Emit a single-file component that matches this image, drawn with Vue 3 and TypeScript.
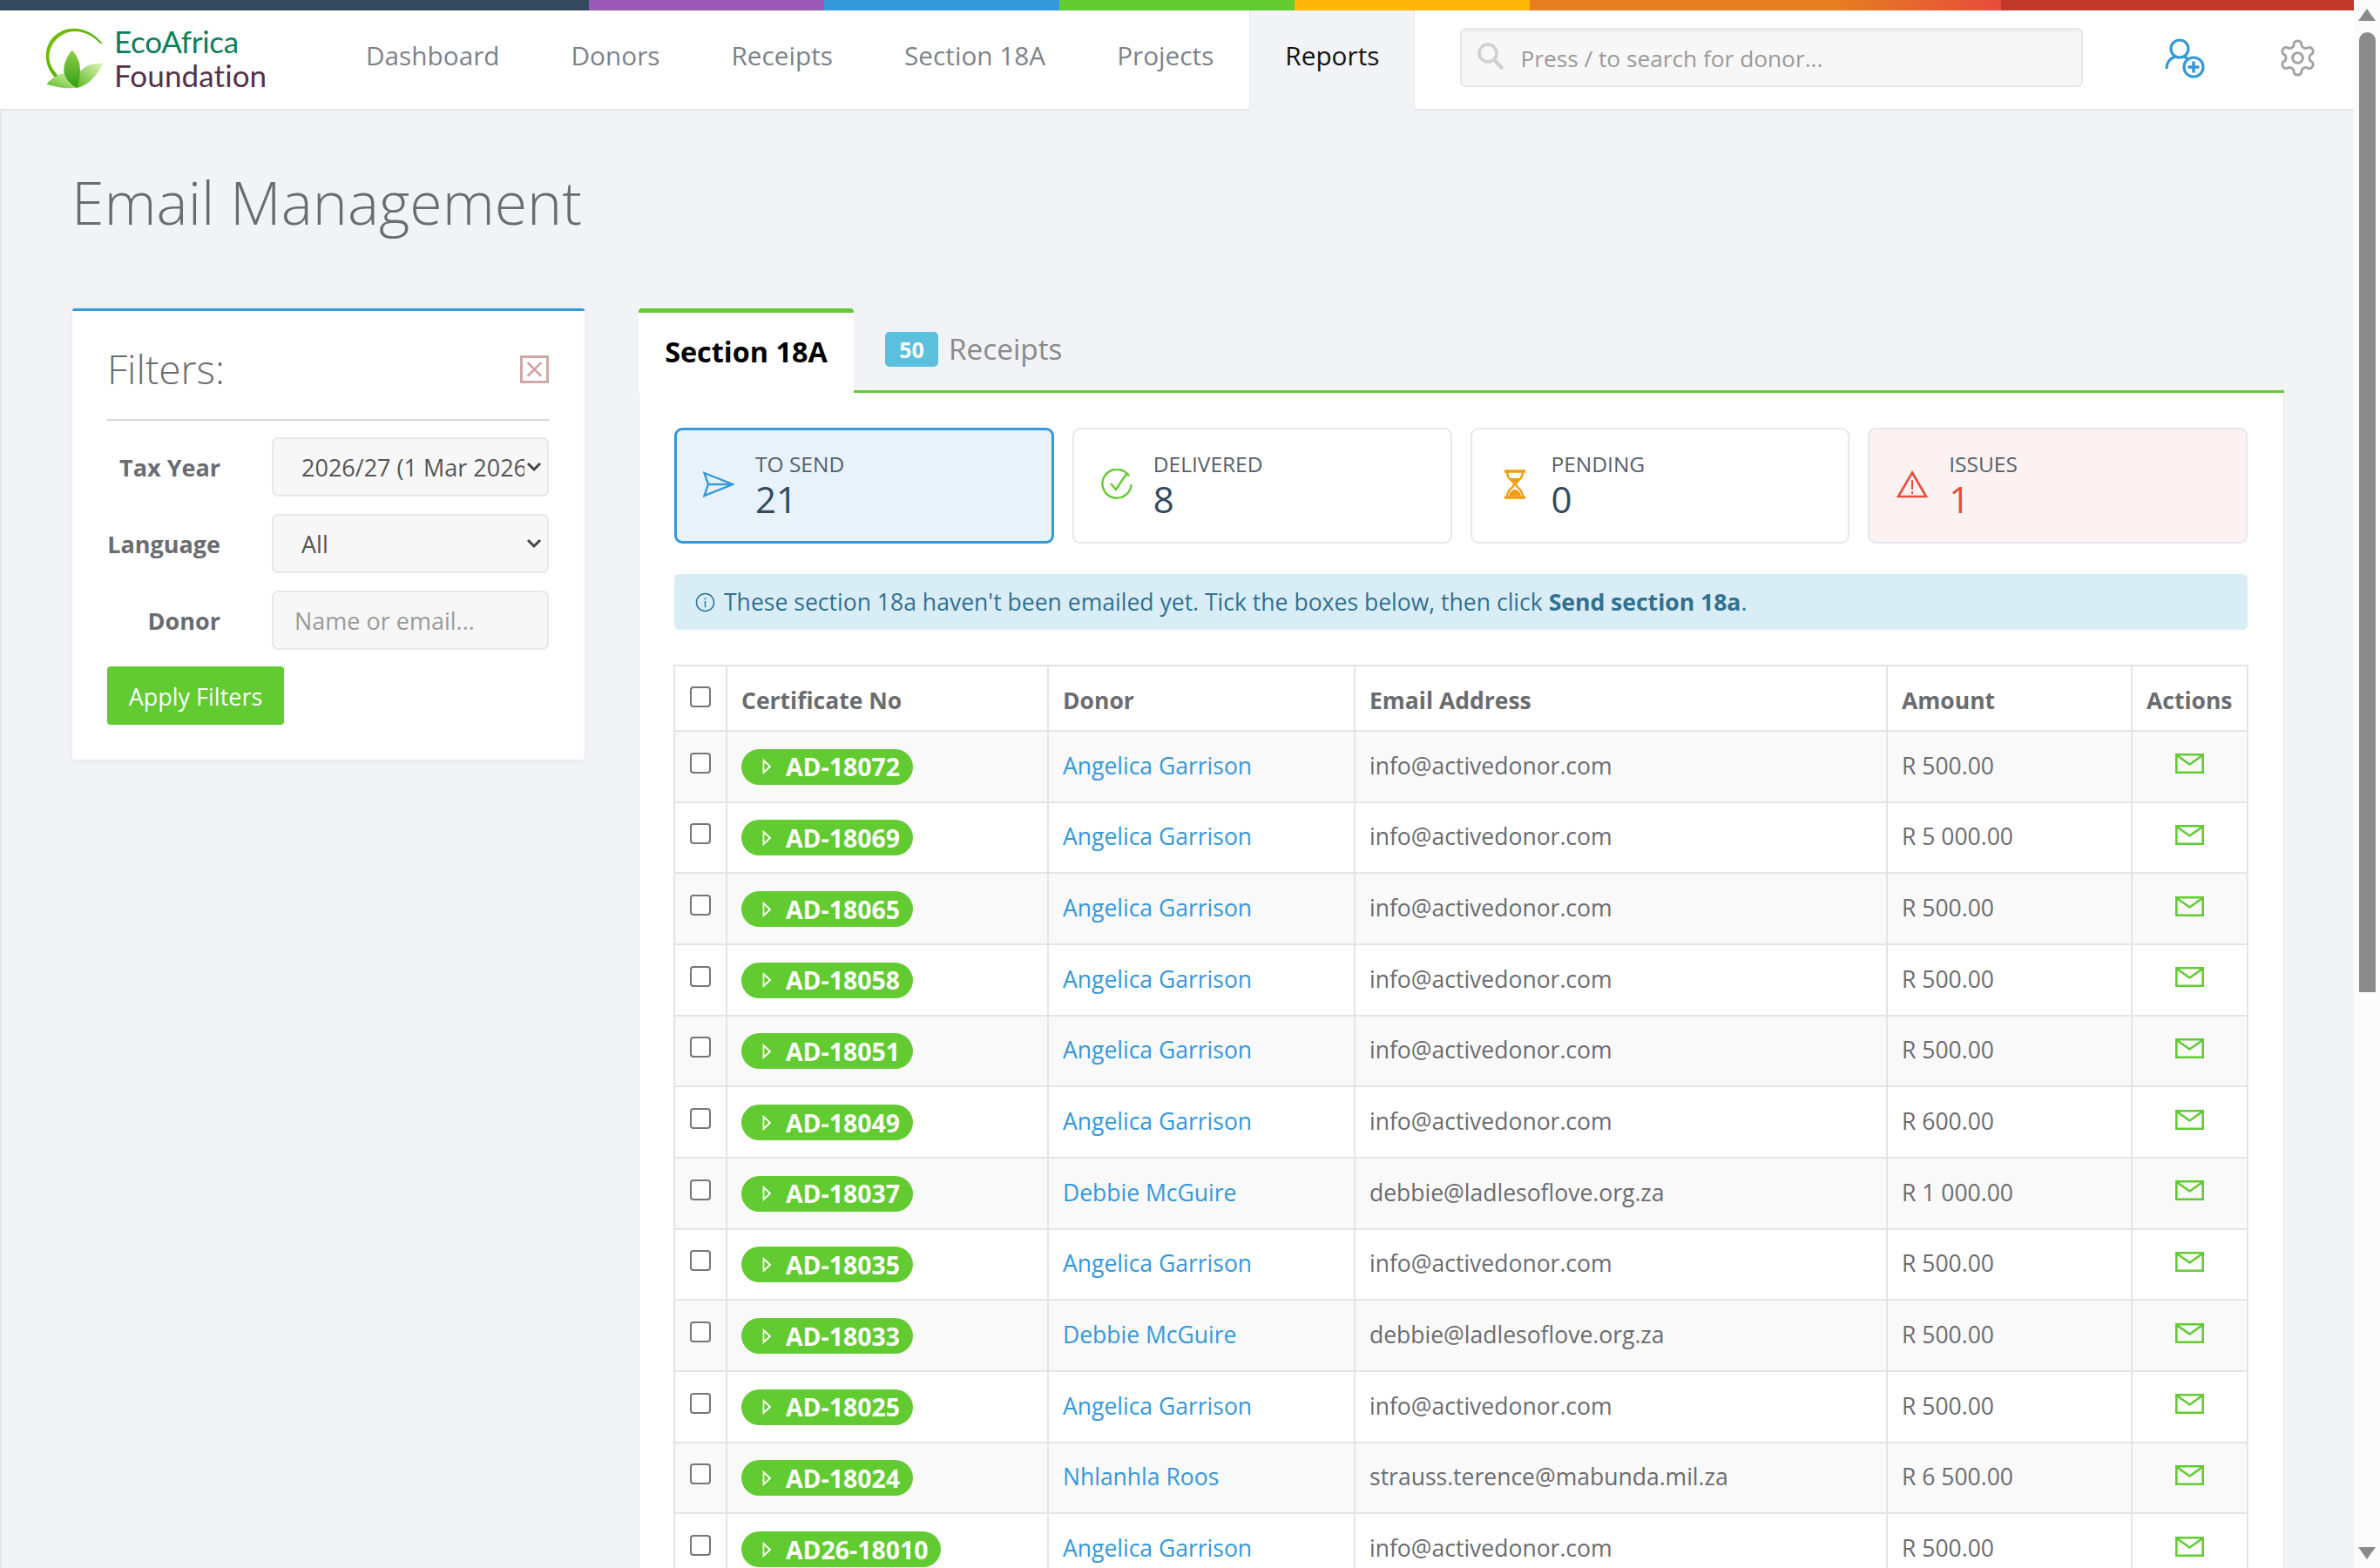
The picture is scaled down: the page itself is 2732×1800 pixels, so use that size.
<template>
  <div class="shell">
    <div class="page">
      <div class="rainbow"></div>
      <header class="topbar">
        <a class="brand">
          <svg class="brand-mark" viewBox="60 60 210 220">
            <defs>
              <linearGradient id="arcGrad" x1="0" y1="0" x2="1" y2="1">
                <stop offset="0" stop-color="#7cc400" />
                <stop offset="0.6" stop-color="#52ad0a" />
                <stop offset="1" stop-color="#a8d86a" />
              </linearGradient>
              <linearGradient id="leafMid" x1="0" y1="0" x2="0" y2="1">
                <stop offset="0" stop-color="#8fd04a" />
                <stop offset="1" stop-color="#2f9e12" />
              </linearGradient>
              <linearGradient id="leafSide" x1="1" y1="0" x2="0" y2="1">
                <stop offset="0" stop-color="#e4f5bd" />
                <stop offset="1" stop-color="#58b81e" />
              </linearGradient>
            </defs>
            <path d="M265 118C235 82 200 65 165 65 110 65 68 105 68 160c0 38 20 72 62 102l45 10c-54-24-96-66-96-108 0-50 42-89 90-89 33 0 62 17 86 41z" fill="url(#arcGrad)" />
            <path d="M70 258c25-30 60-42 80-40 14 12 22 34 24 52-40 6-75-4-104-12z" fill="url(#leafSide)" />
            <path d="M265 185c-40-2-72 14-88 40-4 14-4 30-2 46 40-8 72-45 90-86z" fill="url(#leafSide)" />
            <path d="M158 140c-20 25-30 50-28 75 4 25 24 45 45 56 10-30 14-60 8-88-6-18-14-32-25-43z" fill="url(#leafMid)" />
          </svg>
          <span class="brand-text">
            <span class="brand-eco">EcoAfrica</span>
            <span class="brand-found">Foundation</span>
          </span>
        </a>
        <nav class="nav">
          <a v-for="item in navItems" :key="item" class="nav-item" :class="{ active: item === 'Reports' }">{{ item }}</a>
        </nav>
        <label class="search">
          <svg class="search-icon" viewBox="0 0 31 31" fill="none" stroke="#d0d0d0" stroke-width="3.5">
            <circle cx="12" cy="12" r="10" />
            <path d="M19 19.500 29 30" stroke-width="4.500" />
          </svg>
          <input type="text" placeholder="Press / to search for donor..." />
        </label>
        <svg class="user-add" viewBox="0 0 48 48" fill="none" stroke="#3498db" stroke-width="3.2">
          <circle cx="17" cy="13" r="10" />
          <path d="M2 36c0-7 4-12 10-14" />
          <path d="M22 22.500c1.500.3 3 .8 4 1.500" />
          <circle cx="33" cy="34" r="11" />
          <path d="M33 27.500v13M26.500 34h13" stroke-width="3.600" />
        </svg>
        <svg class="gear" viewBox="0 0 24 24" fill="none" stroke="#a3a3a3" stroke-width="1.500">
          <path d="M12.220 2h-.44a2 2 0 0 0-2 2v.18a2 2 0 0 1-1 1.730l-.43.25a2 2 0 0 1-2 0l-.15-.08a2 2 0 0 0-2.730.73l-.22.38a2 2 0 0 0 .73 2.730l.15.1a2 2 0 0 1 1 1.720v.51a2 2 0 0 1-1 1.740l-.15.09a2 2 0 0 0-.73 2.730l.22.38a2 2 0 0 0 2.730.73l.15-.08a2 2 0 0 1 2 0l.43.25a2 2 0 0 1 1 1.730V20a2 2 0 0 0 2 2h.44a2 2 0 0 0 2-2v-.18a2 2 0 0 1 1-1.730l.43-.25a2 2 0 0 1 2 0l.15.08a2 2 0 0 0 2.730-.73l.22-.39a2 2 0 0 0-.73-2.730l-.15-.08a2 2 0 0 1-1-1.740v-.5a2 2 0 0 1 1-1.740l.15-.09a2 2 0 0 0 .73-2.730l-.22-.38a2 2 0 0 0-2.730-.73l-.15.08a2 2 0 0 1-2 0l-.43-.25a2 2 0 0 1-1-1.730V4a2 2 0 0 0-2-2z" />
          <circle cx="12" cy="12" r="3" />
        </svg>
      </header>

      <main class="content">
        <h1 class="title">Email Management</h1>
        <div class="columns">
          <aside class="filters">
            <div class="filters-head">
              <h2>Filters:</h2>
              <span class="filters-close">
                <svg viewBox="0 0 20 20" stroke="#cf9fa0" stroke-width="2" fill="none"><path d="M4 4l12 12M16 4 4 16" /></svg>
              </span>
            </div>
            <div class="filters-form">
              <label>Tax Year</label>
              <select class="control">
                <option>2026/27 (1 Mar 2026 – 28 Feb 2027)</option>
              </select>
              <label>Language</label>
              <select class="control">
                <option>All</option>
              </select>
              <label>Donor</label>
              <input class="control input" type="text" placeholder="Name or email..." />
            </div>
            <button class="apply">Apply Filters</button>
          </aside>

          <section class="panel">
            <div class="tabs">
              <a class="tab active">Section 18A</a>
              <a class="tab-rest">
                <span class="tab-badge">50</span>
                <span class="tab-label">Receipts</span>
              </a>
            </div>
            <div class="panel-body">
              <div class="stats">
                <div class="stat selected">
                  <svg class="stat-icon" viewBox="0 0 36 30" fill="none" stroke="#3498db" stroke-width="2.400">
                    <path d="M1.500 2 34 15 1.500 28 6 15z" />
                    <path d="M6 15h28" />
                  </svg>
                  <div>
                    <div class="stat-label">TO SEND</div>
                    <div class="stat-value">21</div>
                  </div>
                </div>
                <div class="stat">
                  <svg class="stat-icon" viewBox="0 0 36 36" fill="none" stroke="#62cb31" stroke-width="2.400">
                    <path d="M32 8.500A16.500 16.500 0 1 0 34.500 18" />
                    <path d="M11 17l6 7L29 6" />
                  </svg>
                  <div>
                    <div class="stat-label">DELIVERED</div>
                    <div class="stat-value">8</div>
                  </div>
                </div>
                <div class="stat">
                  <svg class="stat-icon" viewBox="0 0 36 34" fill="none" stroke="#f39c12" stroke-width="2.400">
                    <path d="M6 2h24M6 32h24" stroke-width="3.400" />
                    <path d="M9 3c0 9 8 10 8 14s-8 5-8 14M27 3c0 9-8 10-8 14s8 5 8 14" />
                    <path d="M11 10h14l-7 6zM11 30c1-4 4-7 7-7s6 3 7 7z" fill="#f39c12" stroke="none" />
                  </svg>
                  <div>
                    <div class="stat-label">PENDING</div>
                    <div class="stat-value">0</div>
                  </div>
                </div>
                <div class="stat issue">
                  <svg class="stat-icon" viewBox="0 0 36 32" fill="none" stroke="#e74c3c" stroke-width="2.600">
                    <path d="M18 2.500 34 30H2z" stroke-linejoin="miter" />
                    <path d="M18 11v11M18 24v3" stroke-width="2" />
                  </svg>
                  <div>
                    <div class="stat-label">ISSUES</div>
                    <div class="stat-value">1</div>
                  </div>
                </div>
              </div>

              <div class="notice">
                <svg class="notice-icon" viewBox="0 0 24 24" fill="none" stroke="#31708f" stroke-width="1.500">
                  <circle cx="12" cy="12" r="10.500" />
                  <path d="M12 10.500v7.500M12 6.500v2" />
                </svg>
                <span>These section 18a haven't been emailed yet. Tick the boxes below, then click <b>Send section 18a</b>.</span>
              </div>

              <table class="grid">
                <colgroup>
                  <col v-for="w in colWidths" :key="w" :style="{ width: w + 'px' }" />
                </colgroup>
                <thead>
                  <tr>
                    <th class="check"><input type="checkbox" /></th>
                    <th>Certificate No</th>
                    <th>Donor</th>
                    <th>Email Address</th>
                    <th>Amount</th>
                    <th>Actions</th>
                  </tr>
                </thead>
                <tbody>
                  <tr v-for="row in rows" :key="row.cert">
                    <td class="check"><input type="checkbox" /></td>
                    <td>
                      <span class="cert">
                        <svg viewBox="0 0 11 18" fill="none" stroke="#fff" stroke-width="1.800"><path d="M1.500 2 9 9 1.500 16z" /></svg>
                        {{ row.cert }}
                      </span>
                    </td>
                    <td><a class="donor">{{ row.donor }}</a></td>
                    <td>{{ row.email }}</td>
                    <td>{{ row.amount }}</td>
                    <td class="action">
                      <svg viewBox="0 0 33 23" fill="none" stroke="#62cb31" stroke-width="2.600"><path d="M1.300 1.300h30.400v20.400H1.300zM1.300 1.800 16.500 12.500 31.700 1.800" /></svg>
                    </td>
                  </tr>
                </tbody>
              </table>
            </div>
          </section>
        </div>
      </main>
    </div>

    <div class="scrollbar">
      <span class="arrow up"></span>
      <span class="thumb"></span>
      <span class="arrow down"></span>
    </div>
  </div>
</template>

<script setup lang="ts">
interface Row {
  cert: string
  donor: string
  email: string
  amount: string
}

const navItems = ['Dashboard', 'Donors', 'Receipts', 'Section 18A', 'Projects', 'Reports']
const colWidths = [60, 369, 352, 611, 281, 133]

const angelica = { donor: 'Angelica Garrison', email: 'info@activedonor.com' }
const debbie = { donor: 'Debbie McGuire', email: 'debbie@ladlesoflove.org.za' }

const rows: Row[] = [
  { cert: 'AD-18072', ...angelica, amount: 'R 500.00' },
  { cert: 'AD-18069', ...angelica, amount: 'R 5 000.00' },
  { cert: 'AD-18065', ...angelica, amount: 'R 500.00' },
  { cert: 'AD-18058', ...angelica, amount: 'R 500.00' },
  { cert: 'AD-18051', ...angelica, amount: 'R 500.00' },
  { cert: 'AD-18049', ...angelica, amount: 'R 600.00' },
  { cert: 'AD-18037', ...debbie, amount: 'R 1 000.00' },
  { cert: 'AD-18035', ...angelica, amount: 'R 500.00' },
  { cert: 'AD-18033', ...debbie, amount: 'R 500.00' },
  { cert: 'AD-18025', ...angelica, amount: 'R 500.00' },
  { cert: 'AD-18024', donor: 'Nhlanhla Roos', email: 'strauss.terence@mabunda.mil.za', amount: 'R 6 500.00' },
  { cert: 'AD26-18010', ...angelica, amount: 'R 500.00' },
]
</script>

<style>
html,
body {
  margin: 0;
  overflow: hidden;
}
</style>

<style scoped>
.shell {
  display: flex;
  height: 1800px;
  overflow: hidden;
  font-family: "Open Sans", "Liberation Sans", sans-serif;
  font-size: 26.5px;
  color: #6a6c6f;
}

.page {
  flex: 1;
  min-width: 0;
  display: flex;
  flex-direction: column;
  background: #f1f3f7;
}

.rainbow {
  height: 12px;
  background: linear-gradient(to right,
    #34495e 25%, #9b59b6 25%, #9b59b6 35%, #3498db 35%, #3498db 45%,
    #62cb31 45%, #62cb31 55%, #ffb606 55%, #ffb606 65%, #e67e22 65%,
    #e67e22 78%, #e74c3c 85%, #c0392b 85%);
}

.topbar {
  display: flex;
  align-items: center;
  height: 115px;
  box-sizing: border-box;
  background: #fff;
  border-bottom: 2px solid #e6e6e6;
}

.brand {
  width: 379px;
  height: 100%;
  box-sizing: border-box;
  padding: 0 0 3px 50px;
  display: flex;
  align-items: center;
  gap: 11px;
}

.brand-mark {
  width: 70px;
  height: 73px;
  flex: none;
}

.brand-text {
  display: flex;
  flex-direction: column;
  font-family: Lato, "Open Sans", sans-serif;
  font-size: 35px;
  line-height: 39px;
}

.brand-eco {
  color: #0b7f5c;
  letter-spacing: -0.3px;
}

.brand-found {
  color: #54304a;
  letter-spacing: 0.1px;
}

.nav {
  display: flex;
  align-self: stretch;
  margin-bottom: -2px;
}

.nav-item {
  display: flex;
  align-items: center;
  padding: 0 41px 12px;
  font-size: 29.750px;
  color: #7c8289;
}

.nav-item.active {
  padding: 0 40px 12px;
  color: #111;
  background: #f1f3f7;
  border-left: 1px solid #e6e6e6;
  border-right: 1px solid #e6e6e6;
}

.search {
  width: 715px;
  height: 68px;
  box-sizing: border-box;
  margin: 0 0 5px 52px;
  padding-left: 18px;
  display: flex;
  align-items: center;
  gap: 18px;
  background: #f7f7f7;
  border: 2px solid #e8e8e8;
  border-radius: 6px;
  box-shadow: inset 0 2px 2px rgba(0, 0, 0, 0.05);
}

.search-icon {
  width: 31px;
  height: 31px;
  flex: none;
  margin-bottom: 4px;
}

.search input {
  flex: 1;
  min-width: 0;
  border: 0;
  outline: 0;
  background: transparent;
  font: inherit;
  font-size: 26.250px;
  padding: 2px 0 0;
}

input::placeholder {
  color: #9a9a9a;
  opacity: 1;
}

.user-add {
  width: 48px;
  height: 48px;
  flex: none;
  margin: 0 0 4px 94px;
}

.gear {
  width: 47px;
  height: 47px;
  flex: none;
  margin: 0 0 5px 81px;
}

.content {
  flex: 1;
  min-height: 0;
  padding: 63px 80px 0 81px;
  border-left: 2px solid #e6e6e6;
  box-sizing: border-box;
}

.title {
  margin: 0 0 80px -1px;
  font-size: 68px;
  line-height: 84px;
  font-weight: 300;
  color: #6a6c6f;
}

.columns {
  display: flex;
  align-items: flex-start;
  gap: 62px;
}

.filters {
  width: 588px;
  flex: none;
  box-sizing: border-box;
  padding: 0 41px 40px 40px;
  background: #fff;
  border-top: 3px solid #3498db;
  border-radius: 3px;
  box-shadow: 0 1px 6px rgba(0, 0, 0, 0.06);
}

.filters-head {
  display: flex;
  align-items: center;
  justify-content: space-between;
  padding: 36px 0 28px;
  border-bottom: 2px solid #d8d8d8;
}

.filters-head h2 {
  margin: 0;
  font-size: 46px;
  line-height: 60px;
  font-weight: 300;
}

.filters-close {
  width: 33px;
  height: 32px;
  box-sizing: border-box;
  border: 3px solid #cfa8a8;
  margin-top: 2px;
}

.filters-close svg {
  display: block;
  width: 100%;
  height: 100%;
}

.filters-form {
  display: grid;
  grid-template-columns: 130px 1fr;
  column-gap: 59px;
  row-gap: 20px;
  align-items: center;
  margin-top: 19px;
}

.filters-form label {
  text-align: right;
  font-weight: 700;
  font-size: 27px;
}

.control {
  width: 100%;
  height: 68px;
  box-sizing: border-box;
  padding: 0 24px 0 32px;
  font: inherit;
  font-size: 27px;
  color: #555;
  background-color: #f7f7f7;
  border: 2px solid #e8e8e8;
  border-radius: 7px;
  outline: 0;
}

select.control {
  appearance: none;
  padding-right: 26px;
  background-image: url("data:image/svg+xml,%3Csvg xmlns='http://www.w3.org/2000/svg' width='18' height='12' fill='none' stroke='%23444' stroke-width='3'%3E%3Cpath d='M2 2l7 7 7-7'/%3E%3C/svg%3E");
  background-repeat: no-repeat;
  background-position: right 6px center;
}

.input {
  padding-left: 24px;
}

.apply {
  display: block;
  margin-top: 19px;
  width: 203px;
  height: 67px;
  padding-top: 2px;
  border: 0;
  border-radius: 4px;
  background: #62cb31;
  color: #fff;
  font: inherit;
  font-size: 27px;
}

.panel {
  flex: 1;
  min-width: 0;
}

.tabs {
  display: flex;
  height: 97px;
}

.tab {
  width: 247px;
  box-sizing: border-box;
  display: flex;
  align-items: center;
  justify-content: center;
  padding-bottom: 4px;
  background: #fff;
  border-top: 5px solid #62cb31;
  border-radius: 4px 4px 0 0;
  font-size: 32.400px;
  font-weight: 700;
  color: #000;
}

.tab-rest {
  flex: 1;
  display: flex;
  align-items: center;
  padding-left: 36px;
  border-bottom: 3px solid #62cb31;
}

.tab-badge {
  width: 61px;
  height: 40px;
  display: flex;
  align-items: center;
  justify-content: center;
  border-radius: 5px;
  background: #5bc0de;
  color: #fff;
  font-size: 25px;
  font-weight: 700;
}

.tab-label {
  margin-left: 12px;
  padding-bottom: 2px;
  font-size: 33.300px;
  color: #8a8a8a;
}

.panel-body {
  padding: 40px 41px 0 40px;
  background: #fff;
  border-left: 1px solid #e8eaee;
  border-right: 1px solid #e8eaee;
}

.stats {
  display: grid;
  grid-template-columns: repeat(4, 1fr);
  gap: 21px;
}

.stat {
  height: 133px;
  box-sizing: border-box;
  padding-left: 31px;
  display: flex;
  align-items: center;
  gap: 24px;
  background: #fff;
  border: 2px solid #e4e8ee;
  border-radius: 9px;
}

.stat.selected {
  padding-left: 30px;
  background: #e7f2fb;
  border: 3px solid #3498db;
}

.stat.issue {
  background: #fdf2f2;
}

.stat-icon {
  width: 36px;
  height: 36px;
  flex: none;
  margin-bottom: 4px;
}

.stat-label {
  font-size: 24.500px;
  line-height: 30px;
  color: #56606a;
}

.stat-value {
  font-size: 42px;
  line-height: 50px;
  color: #34495e;
}

.issue .stat-value {
  color: #e74c3c;
}

.notice {
  margin-top: 35px;
  height: 64px;
  box-sizing: border-box;
  padding-left: 24px;
  display: flex;
  align-items: center;
  gap: 10px;
  background: #d9edf7;
  border-radius: 6px;
  color: #31708f;
  font-size: 26.550px;
}

.notice-icon {
  width: 23px;
  height: 23px;
  flex: none;
}

.grid {
  width: calc(100% + 1px);
  margin: 40px 0 0 -1px;
  table-layout: fixed;
  border-collapse: collapse;
  border: 2px solid #e4e4e4;
}

.grid th,
.grid td {
  border: 2px solid #e4e4e4;
  padding: 0 16px;
  text-align: left;
  vertical-align: middle;
  white-space: nowrap;
  overflow: hidden;
}

.grid th {
  height: 69px;
  padding-top: 4px;
  font-weight: 700;
  background: #fff;
}

.grid td {
  height: 77.670px;
  padding-bottom: 2px;
}

.grid tbody tr:nth-child(odd) td {
  background: #f9f9f9;
}

.grid input[type="checkbox"] {
  appearance: none;
  display: block;
  width: 24px;
  height: 24px;
  margin: 0 auto 6px;
  background: #fff;
  border: 2px solid #767676;
  border-radius: 4px;
}

.grid .check {
  padding: 0;
}

.grid td.check input {
  margin-bottom: 8px;
}

.grid th.check input {
  margin: 0 auto 4px;
}

.cert {
  display: inline-flex;
  align-items: center;
  gap: 16px;
  height: 41px;
  padding: 0 15px 0 24px;
  margin-top: 3px;
  border-radius: 21px;
  background: #62cb31;
  color: #fff;
  font-size: 28.400px;
  font-weight: 700;
}

.cert svg {
  width: 11px;
  height: 18px;
}

.donor {
  color: #3498db;
}

.action {
  text-align: center !important;
}

.action svg {
  display: block;
  width: 33px;
  height: 23px;
  margin: 0 auto 4px;
}

.scrollbar {
  width: 30px;
  flex: none;
  display: flex;
  flex-direction: column;
  align-items: center;
  background: #fcfcfc;
}

.arrow {
  width: 0;
  height: 0;
  border-left: 10px solid transparent;
  border-right: 10px solid transparent;
}

.arrow.up {
  margin-top: 10px;
  border-bottom: 14px solid #8b8b8b;
}

.arrow.down {
  margin-top: auto;
  margin-bottom: 10px;
  border-top: 14px solid #8b8b8b;
}

.thumb {
  width: 19px;
  height: 1102px;
  margin-top: 13px;
  border-radius: 10px 10px 0 0;
  background: #8b8b8b;
}
</style>
